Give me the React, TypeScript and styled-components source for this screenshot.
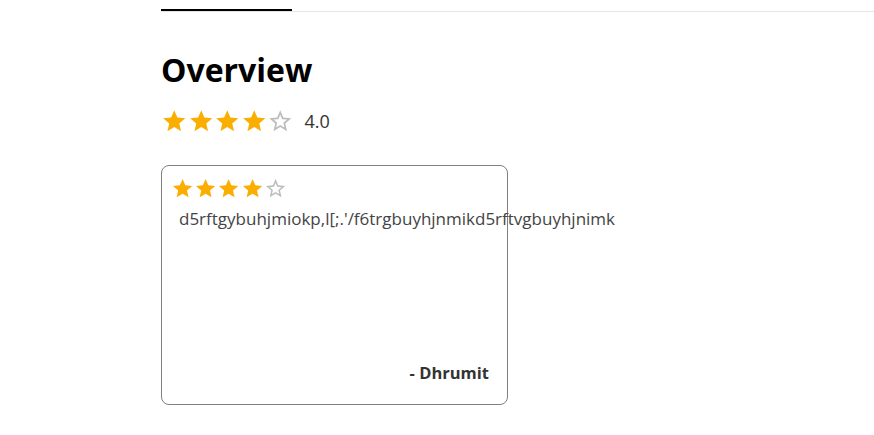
import styled, { createGlobalStyle } from 'styled-components'

const GlobalStyle = createGlobalStyle`
    body {
        margin: 0;
        background: #fff;
        font-family: "Open Sans", "Noto Sans", sans-serif;
    }
`

const Page = styled.div`
    padding-left: 161px;
`

const TabBar = styled.div`
    height: 11px;
    border-bottom: 1px solid #e5e5e5;
    display: flex;
    align-items: flex-end;
`

const ActiveTab = styled.div`
    width: 131px;
    height: 2px;
    background: #000;
`

const Section = styled.section`
    padding-top: 38px;
`

const Title = styled.h1`
    margin: 0;
    font-size: 32px;
    font-weight: 700;
    line-height: 40px;
    color: #000;
`

const RatingRow = styled.div`
    display: flex;
    align-items: center;
    margin-top: 18px;
`

const Stars = styled.div<{ $size: number }>`
    display: flex;
    svg {
        width: ${props => props.$size}px;
        height: ${props => props.$size}px;
        display: block;
    }
`

const Score = styled.span`
    margin-left: 11px;
    font-size: 18px;
    line-height: 24px;
    color: #333;
`

const Card = styled.div`
    margin-top: 30px;
    width: 347px;
    height: 240px;
    box-sizing: border-box;
    border: 1px solid #808080;
    border-radius: 8px;
    padding: 11px 18px 20px 9px;
    display: flex;
    flex-direction: column;
`

const ReviewText = styled.p`
    margin: 7px 0 0 8px;
    font-size: 17px;
    line-height: 24px;
    color: #444;
    white-space: nowrap;
`

const Author = styled.div`
    margin-top: auto;
    text-align: right;
    font-size: 16.5px;
    line-height: 22px;
    font-weight: 700;
    color: #333;
`

const FULL = 'M12 17.27 18.18 21l-1.64-7.03L22 9.24l-7.19-.61L12 2 9.19 8.63 2 9.24l5.46 4.73L5.82 21z'
const EMPTY = 'M22 9.24l-7.19-.62L12 2 9.19 8.63 2 9.24l5.46 4.73L5.82 21 12 17.27 18.18 21l-1.63-7.03L22 9.24zM12 15.4l-3.76 2.27 1-4.28-3.32-2.88 4.38-.38L12 6.1l1.71 4.04 4.38.38-3.32 2.88 1 4.28L12 15.4z'

function Rating({ value, size }: { value: number, size: number }) {
    return (
        <Stars $size={size}>
            {[1, 2, 3, 4, 5].map((i) => (
                <svg key={i} viewBox="0 0 24 24">
                    <path d={i <= value ? FULL : EMPTY} fill={i <= value ? '#faaf00' : 'rgba(0,0,0,0.26)'} />
                </svg>
            ))}
        </Stars>
    )
}

function App() {
    return (
        <Page>
            <GlobalStyle />
            <TabBar>
                <ActiveTab />
            </TabBar>
            <Section>
                <Title>Overview</Title>
                <RatingRow>
                    <Rating value={4} size={26.5} />
                    <Score>4.0</Score>
                </RatingRow>
                <Card>
                    <Rating value={4} size={23.2} />
                    <ReviewText>d5rftgybuhjmiokp,l[;.'/f6trgbuyhjnmikd5rftvgbuyhjnimk</ReviewText>
                    <Author>- Dhrumit</Author>
                </Card>
            </Section>
        </Page>
    )
}
export default App
